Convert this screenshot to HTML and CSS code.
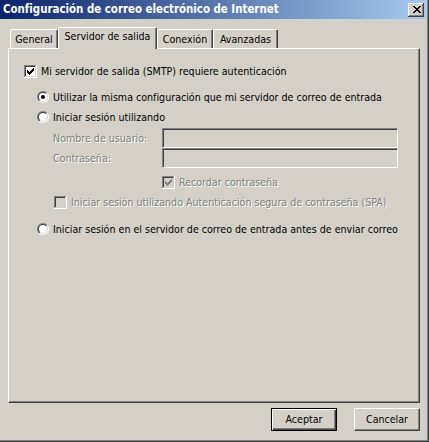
FILE: index.html
```html
<!DOCTYPE html>
<html lang="es">
<head>
<meta charset="utf-8">
<title>Configuración de correo electrónico de Internet</title>
<link rel="stylesheet" href="styles.css">
</head>
<body>
<div class="window">
  <div class="titlebar">
    <span class="title">Configuración de correo electrónico de Internet</span>
    <span class="close">
      <svg width="8" height="7" viewBox="0 0 8 7" shape-rendering="crispEdges"><path d="M0 0h2v1H0z M6 0h2v1H6z M1 1h2v1H1z M5 1h2v1H5z M2 2h4v1H2z M3 3h2v1H3z M2 4h4v1H2z M1 5h2v1H1z M5 5h2v1H5z M0 6h2v1H0z M6 6h2v1H6z" fill="#000"/></svg>
    </span>
  </div>
  <div class="content">
    <div class="tabs">
      <div class="tab tab-general">General</div>
      <div class="tab tab-active tab-servidor">Servidor de salida</div>
      <div class="tab tab-conexion">Conexión</div>
      <div class="tab tab-avanzadas">Avanzadas</div>
    </div>
    <div class="panel">
      <div class="row row-auth">
        <svg class="cb" width="13" height="13" viewBox="0 0 13 13" shape-rendering="crispEdges"><rect width="13" height="13" fill="#fff"/><path d="M0 0h12v1H1v11H0z" fill="#808080"/><path d="M1 1h10v1H2v9H1z" fill="#404040"/><path d="M12 0h1v13H0v-1h12z" fill="#fff"/><path d="M11 1h1v11H1v-1h10z" fill="#d4d0c8"/><path d="M3 5h1v3H3z M4 6h1v3H4z M5 7h1v3H5z M6 6h1v3H6z M7 5h1v3H7z M8 4h1v3H8z M9 3h1v3H9z" fill="#000"/></svg>
        <span>Mi servidor de salida (SMTP) requiere autenticación</span>
      </div>
      <div class="row row-same">
        <svg class="rb" width="12" height="12" viewBox="0 0 12 12"><defs><linearGradient id="ra1" x1="0" y1="0" x2="1" y2="1"><stop offset=".5" stop-color="#808080"/><stop offset=".5" stop-color="#fff"/></linearGradient><linearGradient id="rb1" x1="0" y1="0" x2="1" y2="1"><stop offset=".5" stop-color="#404040"/><stop offset=".5" stop-color="#d4d0c8"/></linearGradient></defs><circle cx="6" cy="6" r="6" fill="url(#ra1)"/><circle cx="6" cy="6" r="5" fill="url(#rb1)"/><circle cx="6" cy="6" r="4" fill="#fff"/><circle cx="6" cy="6" r="2" fill="#000"/></svg>
        <span>Utilizar la misma configuración que mi servidor de correo de entrada</span>
      </div>
      <div class="row row-login">
        <svg class="rb" width="12" height="12" viewBox="0 0 12 12"><defs><linearGradient id="ra2" x1="0" y1="0" x2="1" y2="1"><stop offset=".5" stop-color="#808080"/><stop offset=".5" stop-color="#fff"/></linearGradient><linearGradient id="rb2" x1="0" y1="0" x2="1" y2="1"><stop offset=".5" stop-color="#404040"/><stop offset=".5" stop-color="#d4d0c8"/></linearGradient></defs><circle cx="6" cy="6" r="6" fill="url(#ra2)"/><circle cx="6" cy="6" r="5" fill="url(#rb2)"/><circle cx="6" cy="6" r="4" fill="#fff"/></svg>
        <span>Iniciar sesión utilizando</span>
      </div>
      <div class="field-row field-first">
        <span class="field-label disabled">Nombre de usuario:</span>
        <span class="field-input"></span>
      </div>
      <div class="field-row">
        <span class="field-label disabled">Contraseña:</span>
        <span class="field-input"></span>
      </div>
      <div class="row row-remember">
        <svg class="cb" width="13" height="13" viewBox="0 0 13 13" shape-rendering="crispEdges"><rect width="13" height="13" fill="#d4d0c8"/><path d="M0 0h12v1H1v11H0z" fill="#808080"/><path d="M1 1h10v1H2v9H1z" fill="#404040"/><path d="M12 0h1v13H0v-1h12z" fill="#fff"/><path d="M11 1h1v11H1v-1h10z" fill="#d4d0c8"/><path d="M3 5h1v3H3z M4 6h1v3H4z M5 7h1v3H5z M6 6h1v3H6z M7 5h1v3H7z M8 4h1v3H8z M9 3h1v3H9z" fill="#808080"/></svg>
        <span class="disabled">Recordar contraseña</span>
      </div>
      <div class="row row-spa">
        <svg class="cb" width="13" height="13" viewBox="0 0 13 13" shape-rendering="crispEdges"><rect width="13" height="13" fill="#d4d0c8"/><path d="M0 0h12v1H1v11H0z" fill="#808080"/><path d="M1 1h10v1H2v9H1z" fill="#404040"/><path d="M12 0h1v13H0v-1h12z" fill="#fff"/><path d="M11 1h1v11H1v-1h10z" fill="#d4d0c8"/></svg>
        <span class="disabled">Iniciar sesión utilizando Autenticación segura de contraseña (SPA)</span>
      </div>
      <div class="row row-before">
        <svg class="rb" width="12" height="12" viewBox="0 0 12 12"><defs><linearGradient id="ra3" x1="0" y1="0" x2="1" y2="1"><stop offset=".5" stop-color="#808080"/><stop offset=".5" stop-color="#fff"/></linearGradient><linearGradient id="rb3" x1="0" y1="0" x2="1" y2="1"><stop offset=".5" stop-color="#404040"/><stop offset=".5" stop-color="#d4d0c8"/></linearGradient></defs><circle cx="6" cy="6" r="6" fill="url(#ra3)"/><circle cx="6" cy="6" r="5" fill="url(#rb3)"/><circle cx="6" cy="6" r="4" fill="#fff"/></svg>
        <span>Iniciar sesión en el servidor de correo de entrada antes de enviar correo</span>
      </div>
    </div>
    <div class="buttons">
      <div class="btn btn-default">Aceptar</div>
      <div class="btn">Cancelar</div>
    </div>
  </div>
</div>
</body>
</html>
```
FILE: styles.css
```css
* { box-sizing: border-box; }
html, body { margin: 0; padding: 0; }
body {
  background: #d4d0c8;
  font-family: "DejaVu Sans Condensed", "DejaVu Sans", sans-serif;
  font-size: 10.6px;
  line-height: 13px;
  color: #000;
}
.window {
  width: 429px;
  height: 442px;
  background: #d4d0c8;
  padding: 0 3px 3px 0;
  box-shadow: inset -1px -1px #404040, inset -2px -2px #808080;
  display: flex;
  flex-direction: column;
}
.titlebar {
  flex: none;
  height: 19px;
  display: flex;
  align-items: center;
  justify-content: space-between;
  padding: 0 2px 0 3px;
  background: linear-gradient(to right, #0a246a, #a6caf0);
}
.title {
  color: #fff;
  font-weight: bold;
  font-size: 11.4px;
  white-space: nowrap;
}
.close {
  width: 16px;
  height: 14px;
  background: #d4d0c8;
  box-shadow: inset -1px -1px #404040, inset 1px 1px #fff, inset -2px -2px #808080;
  display: flex;
  align-items: center;
  justify-content: center;
  padding-left: 1px;
}
.close svg { display: block; }
.content {
  flex: 1;
  padding: 8px 6px 0 8px;
  display: flex;
  flex-direction: column;
}
.tabs {
  flex: none;
  height: 21px;
  display: flex;
  align-items: flex-end;
  padding-left: 2px;
}
.tab {
  height: 19px;
  border: 1px solid;
  border-bottom: 0;
  border-color: #fff #404040 transparent #fff;
  border-radius: 2px 2px 0 0;
  box-shadow: inset -1px 0 #808080;
  display: flex;
  justify-content: center;
  padding-top: 3px;
  white-space: nowrap;
}
.tab-active {
  position: relative;
  z-index: 1;
  height: 22px;
  margin-bottom: -1px;
  padding-top: 2px;
  background: #d4d0c8;
}
.tab-general { width: 48px; }
.tab-servidor { width: 99px; }
.tab-conexion { width: 56px; }
.tab-avanzadas { width: 65px; }
.panel {
  flex: none;
  height: 355px;
  border: 1px solid;
  border-color: #fff #404040 #404040 #fff;
  box-shadow: inset -1px -1px #808080;
  display: flex;
  flex-direction: column;
}
.row {
  display: flex;
  align-items: center;
  gap: 4px;
  height: 20px;
  white-space: nowrap;
}
.cb, .rb { display: block; flex: none; }
.row-auth { margin-top: 12px; padding-left: 15px; }
.row-same { margin-top: 6px; padding-left: 28px; }
.row-login { padding-left: 28px; }
.field-row {
  display: flex;
  align-items: center;
  height: 20px;
  padding-left: 44px;
}
.field-first { margin-top: 1px; }
.field-label { width: 109px; flex: none; white-space: nowrap; }
.field-input {
  width: 236px;
  height: 20px;
  border: 1px solid;
  border-color: #808080 #fff #fff #808080;
  box-shadow: inset 1px 1px #404040, inset -1px -1px #d4d0c8;
  background: #d4d0c8;
}
.row-remember { margin-top: 5px; height: 19px; padding-left: 153px; }
.row-spa { padding-left: 45px; }
.row-before { margin-top: 7px; padding-left: 28px; }
.disabled {
  color: #808080;
  text-shadow: 1px 1px 0 #fff;
}
.buttons {
  flex: none;
  display: flex;
  justify-content: flex-end;
  gap: 17px;
  margin-top: 5px;
}
.btn {
  width: 66px;
  height: 23px;
  display: flex;
  align-items: center;
  justify-content: center;
  border: 1px solid;
  border-color: #fff #404040 #404040 #fff;
  box-shadow: inset -1px -1px #808080;
}
.btn-default {
  border-color: #000;
  box-shadow: inset 1px 1px #fff, inset -1px -1px #404040, inset -2px -2px #808080;
}
```
